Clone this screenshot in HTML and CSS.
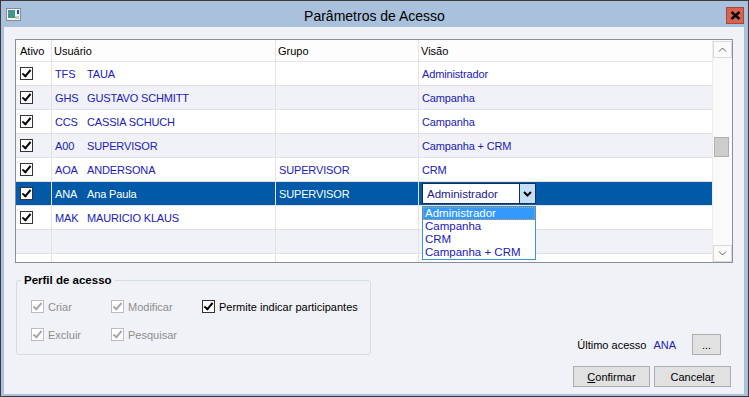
FILE: index.html
```html
<!DOCTYPE html>
<html lang="pt-BR">
<head>
  <meta charset="UTF-8" />
  <title>Parâmetros de Acesso</title>
  <link rel="stylesheet" href="styles.css">
</head>
<body>
  <div class="window">
    <div class="titlebar">
      <span class="app-icon">
        <svg width="15" height="13" viewBox="0 0 15 13">
          <defs>
            <linearGradient id="ig" x1="0" y1="0" x2="1" y2="1">
              <stop offset="0" stop-color="#4f8fb0"/>
              <stop offset="1" stop-color="#3a9a6a"/>
            </linearGradient>
          </defs>
          <rect x="0.5" y="0.5" width="14" height="12" fill="#f2f2f2" stroke="#8a8a8a"/>
          <rect x="2" y="2" width="7" height="8" fill="url(#ig)"/>
          <rect x="11" y="2" width="2" height="4" fill="#1d4fb8"/>
          <rect x="9" y="8" width="4" height="3" fill="#c8c8c8"/>
        </svg>
      </span>
      <div class="title">Parâmetros de Acesso</div>
      <button class="close-btn">
        <svg width="11" height="9" viewBox="0 0 11 9">
          <path d="M1.5 1 L9.5 8 M9.5 1 L1.5 8" stroke="#000" stroke-width="2.4" fill="none"/>
        </svg>
      </button>
    </div>

    <div class="client">
      <div class="grid">
        <div class="grid-main">
          <div class="grid-row grid-head">
            <div class="cell">Ativo</div>
            <div class="cell">Usuário</div>
            <div class="cell">Grupo</div>
            <div class="cell">Visão</div>
          </div>

          <div class="grid-row">
            <div class="cell"><span class="chk on"></span></div>
            <div class="cell"><span class="code">TFS</span>TAUA</div>
            <div class="cell"></div>
            <div class="cell">Administrador</div>
          </div>
          <div class="grid-row alt">
            <div class="cell"><span class="chk on"></span></div>
            <div class="cell"><span class="code">GHS</span>GUSTAVO SCHMITT</div>
            <div class="cell"></div>
            <div class="cell">Campanha</div>
          </div>
          <div class="grid-row">
            <div class="cell"><span class="chk on"></span></div>
            <div class="cell"><span class="code">CCS</span>CASSIA SCHUCH</div>
            <div class="cell"></div>
            <div class="cell">Campanha</div>
          </div>
          <div class="grid-row alt">
            <div class="cell"><span class="chk on"></span></div>
            <div class="cell"><span class="code">A00</span>SUPERVISOR</div>
            <div class="cell"></div>
            <div class="cell">Campanha + CRM</div>
          </div>
          <div class="grid-row">
            <div class="cell"><span class="chk on"></span></div>
            <div class="cell"><span class="code">AOA</span>ANDERSONA</div>
            <div class="cell">SUPERVISOR</div>
            <div class="cell">CRM</div>
          </div>
          <div class="grid-row selected">
            <div class="cell"><span class="chk on"></span></div>
            <div class="cell"><span class="code">ANA</span>Ana Paula</div>
            <div class="cell">SUPERVISOR</div>
            <div class="cell editor">
              <div class="combo">
                <span class="combo-text">Administrador</span>
                <span class="combo-btn">
                  <svg width="9" height="6" viewBox="0 0 9 6">
                    <path d="M1 1 L4.5 4.5 L8 1" stroke="#000" stroke-width="2" fill="none"/>
                  </svg>
                </span>
              </div>
              <ul class="combo-list">
                <li class="current">Administrador</li>
                <li>Campanha</li>
                <li>CRM</li>
                <li>Campanha + CRM</li>
              </ul>
            </div>
          </div>
          <div class="grid-row">
            <div class="cell"><span class="chk on"></span></div>
            <div class="cell"><span class="code">MAK</span>MAURICIO KLAUS</div>
            <div class="cell"></div>
            <div class="cell"></div>
          </div>
          <div class="grid-row alt">
            <div class="cell"></div>
            <div class="cell"></div>
            <div class="cell"></div>
            <div class="cell"></div>
          </div>
          <div class="grid-row">
            <div class="cell"></div>
            <div class="cell"></div>
            <div class="cell"></div>
            <div class="cell"></div>
          </div>
        </div>

        <div class="vscroll">
          <div class="sb-btn">
            <svg width="9" height="5" viewBox="0 0 9 5"><path d="M1 4.5 L4.5 1 L8 4.5" stroke="#606060" stroke-width="1" fill="none"/></svg>
          </div>
          <div class="sb-track"><div class="sb-thumb"></div></div>
          <div class="sb-btn">
            <svg width="9" height="5" viewBox="0 0 9 5"><path d="M1 0.5 L4.5 4 L8 0.5" stroke="#606060" stroke-width="1" fill="none"/></svg>
          </div>
        </div>
      </div>

      <div class="bottom">
        <fieldset class="profile">
          <legend>Perfil de acesso</legend>
          <div class="options">
            <label class="opt disabled"><span class="chk on"></span>Criar</label>
            <label class="opt disabled"><span class="chk on"></span>Modificar</label>
            <label class="opt"><span class="chk on"></span>Permite indicar participantes</label>
            <label class="opt disabled"><span class="chk on"></span>Excluir</label>
            <label class="opt disabled"><span class="chk on"></span>Pesquisar</label>
          </div>
        </fieldset>

        <div class="side">
          <div class="last-access">
            <span>Último acesso</span>
            <span class="last-user">ANA</span>
            <button class="btn small">...</button>
          </div>
          <div class="actions">
            <button class="btn"><u>C</u>onfirmar</button>
            <button class="btn">Cancela<u>r</u></button>
          </div>
        </div>
      </div>
    </div>
  </div>
</body>
</html>
```

FILE: styles.css
```css
body {
  margin: 0;
  font-family: 'Liberation Sans', Arial, sans-serif;
  font-size: 11px;
  color: #000;
}

.window {
  width: 749px;
  height: 397px;
  box-sizing: border-box;
  border: 1px solid #3b3b3b;
  background: #a9c1dc;
  display: flex;
  flex-direction: column;
}

/* title bar */
.titlebar {
  height: 26px;
  display: grid;
  grid-template-columns: 40px 1fr 40px;
  align-items: center;
}

.app-icon {
  display: flex;
  padding-left: 5px;
  margin-top: 1px;
}

.title {
  text-align: center;
  font-size: 14px;
  padding-top: 3px;
  color: #000;
}

.close-btn {
  justify-self: end;
  margin: 3px 4px 0 0;
  width: 18px;
  height: 17px;
  padding: 0;
  border: 1px solid #a8483a;
  background: #d5634f;
  display: flex;
  align-items: center;
  justify-content: center;
}

/* client area */
.client {
  flex: 1;
  margin: 0 4px 2px 3px;
  background: #f0f2f7;
  padding: 12px 11px 0 11px;
  display: flex;
  flex-direction: column;
}

.grid {
  height: 224px;
  box-sizing: border-box;
  border: 1px solid #8a9099;
  background: #fff;
  display: flex;
}

.grid-main {
  width: 697px;
  overflow: hidden;
}

.grid-row {
  display: grid;
  grid-template-columns: 36px 224px 143px 294px;
  height: 24px;
  box-sizing: border-box;
  border-bottom: 1px solid #e2e3e8;
  background: #fff;
  color: #2020bd;
}

.grid-row.alt {
  background: #f0f2f7;
}

.grid-row.grid-head {
  height: 22px;
  color: #000;
  background: #fdfdfd;
  border-bottom-color: #e6e6e6;
}

.grid-row.selected {
  background: #005aa8;
  color: #fff;
}

.cell {
  border-right: 1px solid #e2e3e8;
  display: flex;
  align-items: center;
  padding-left: 3px;
  white-space: nowrap;
  letter-spacing: -0.15px;
}

.grid-head .cell {
  padding-left: 2px;
  letter-spacing: 0;
}

.grid-row .cell:first-child {
  padding-left: 4px;
}

.code {
  display: inline-block;
  width: 32px;
}

/* checkboxes */
.chk {
  position: relative;
  display: inline-block;
  width: 13px;
  height: 13px;
  box-sizing: border-box;
  border: 1px solid #333;
  background: #fff;
  flex-shrink: 0;
}

.chk.on::after {
  content: '';
  position: absolute;
  left: 3px;
  top: 0px;
  width: 3px;
  height: 7px;
  border: solid #000;
  border-width: 0 2px 2px 0;
  transform: rotate(40deg);
}

/* inline editor */
.editor {
  position: relative;
  padding-left: 3px;
  align-items: flex-start;
  padding-top: 1px;
}

.combo {
  width: 114px;
  height: 21px;
  box-sizing: border-box;
  border: 1px solid #1c2f4f;
  background: #fff;
  display: flex;
  color: #20208a;
}

.combo-text {
  flex: 1;
  display: flex;
  align-items: center;
  padding-left: 4px;
  font-size: 11.5px;
  letter-spacing: 0;
}

.combo-btn {
  width: 15px;
  border-left: 1px solid #1c2f4f;
  background: #c4e0f6;
  display: flex;
  align-items: center;
  justify-content: center;
}

.combo-list {
  position: absolute;
  left: 3px;
  top: 24px;
  z-index: 2;
  width: 114px;
  box-sizing: border-box;
  margin: 0;
  padding: 0;
  list-style: none;
  border: 1px solid #3a9ad0;
  background: #fff;
  font-size: 11.5px;
  letter-spacing: 0;
  color: #2020bd;
}

.combo-list li {
  height: 13px;
  line-height: 13px;
  padding-left: 2px;
}

.combo-list li.current {
  background: #3399ff;
  color: #fff;
  outline: 1px dotted #d59a5a;
  outline-offset: -1px;
}

/* scrollbar */
.vscroll {
  width: 19px;
  border-left: 1px solid #ececec;
  background: #fafafa;
  display: flex;
  flex-direction: column;
  padding-top: 1px;
}

.sb-btn {
  height: 17px;
  box-sizing: border-box;
  border: 1px solid #dadada;
  display: flex;
  align-items: center;
  justify-content: center;
}

.sb-track {
  flex: 1;
}

.sb-thumb {
  margin: 79px 0 0 1px;
  width: 15px;
  height: 20px;
  box-sizing: border-box;
  background: #cdcdcd;
  border: 1px solid #b0b0b0;
}

/* bottom */
.bottom {
  display: flex;
  align-items: flex-start;
  margin-top: 11px;
}

.profile {
  margin: 0 0 0 1px;
  width: 355px;
  box-sizing: border-box;
  border: 1px solid #d3dbe3;
  border-radius: 3px;
  padding: 12px 4px 11px 14px;
}

.profile legend {
  font-weight: bold;
  font-size: 11.5px;
  padding: 0 3px;
  margin-left: -10px;
}

.options {
  display: grid;
  grid-template-columns: 80px 91px auto;
  row-gap: 11px;
}

.opt {
  display: flex;
  align-items: center;
  gap: 4px;
  height: 17px;
}

.opt.disabled {
  color: #8d8d8d;
}

.opt.disabled .chk {
  border-color: #bcbcbc;
}

.opt.disabled .chk::after {
  border-color: #a8a8a8;
}

.side {
  margin-left: auto;
  margin-right: 2px;
  padding-top: 60px;
  display: flex;
  flex-direction: column;
  align-items: flex-end;
  gap: 11px;
}

.last-access {
  display: flex;
  align-items: center;
  margin-right: 10px;
}

.last-user {
  color: #2020bd;
  margin: 0 16px 0 7px;
}

.btn {
  font-family: 'Liberation Sans', Arial, sans-serif;
  font-size: 11px;
  width: 77px;
  height: 21px;
  padding: 0;
  border: 1px solid #adadad;
  background: #e1e1e1;
  color: #000;
}

.btn.small {
  width: 29px;
}

.actions {
  display: flex;
  gap: 4px;
}
```
